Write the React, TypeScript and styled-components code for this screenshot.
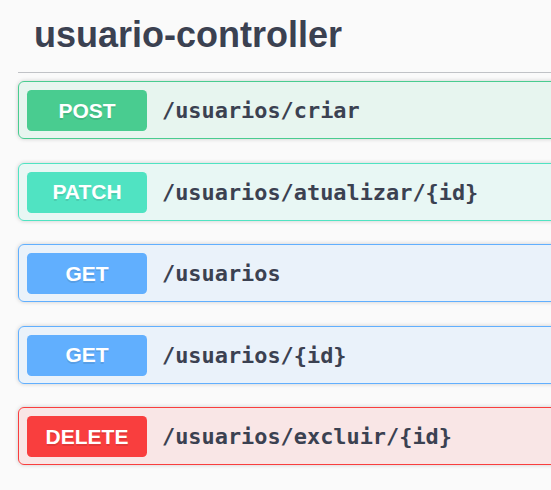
import React from 'react';
import styled, { createGlobalStyle } from 'styled-components';

type Method = 'post' | 'patch' | 'get' | 'delete';

interface Operation {
  method: Method;
  path: string;
}

const colors: Record<Method, { main: string; bg: string }> = {
  post: { main: '#49cc90', bg: 'rgba(73, 204, 144, 0.1)' },
  patch: { main: '#50e3c2', bg: 'rgba(80, 227, 194, 0.1)' },
  get: { main: '#61affe', bg: 'rgba(97, 175, 254, 0.1)' },
  delete: { main: '#f93e3e', bg: 'rgba(249, 62, 62, 0.1)' },
};

const operations: Operation[] = [
  { method: 'post', path: '/usuarios/criar' },
  { method: 'patch', path: '/usuarios/atualizar/{id}' },
  { method: 'get', path: '/usuarios' },
  { method: 'get', path: '/usuarios/{id}' },
  { method: 'delete', path: '/usuarios/excluir/{id}' },
];

const GlobalStyle = createGlobalStyle`
  html, body {
    margin: 0;
    padding: 0;
    background: #fafafa;
  }
`;

// the panel is cut by the right edge of the window in the screenshot
const Page = styled.div`
  width: 100%;
  overflow: hidden;
`;

const Section = styled.section`
  padding-left: 18px;
  width: calc(100% + 40px);
  box-sizing: border-box;
`;

const TagHeader = styled.h3`
  margin: 0;
  padding: 14px 0 16px 16px;
  border-bottom: 1px solid rgba(59, 65, 81, 0.3);
  font-family: 'Liberation Sans', Arial, sans-serif;
  font-size: 36px;
  line-height: 42px;
  font-weight: 700;
  color: #3b4151;
`;

const OpList = styled.div`
  display: flex;
  flex-direction: column;
  gap: 23.5px;
  padding: 8px 0 24px;
`;

const OpBlock = styled.div<{ $method: Method }>`
  display: flex;
  align-items: center;
  padding: 8px 8px 7px;
  border: 1px solid ${(p) => colors[p.$method].main};
  border-radius: 6px;
  background: ${(p) => colors[p.$method].bg};
  box-shadow: 0 0 4.5px rgba(0, 0, 0, 0.19);
`;

const MethodBadge = styled.span<{ $method: Method }>`
  display: flex;
  align-items: center;
  justify-content: center;
  width: 120px;
  height: 41px;
  flex-shrink: 0;
  border-radius: 4.5px;
  background: ${(p) => colors[p.$method].main};
  color: #fff;
  font-family: 'Liberation Sans', Arial, sans-serif;
  font-size: 21px;
  font-weight: 700;
  text-shadow: 0 1.5px 0 rgba(0, 0, 0, 0.1);
  text-transform: uppercase;
`;

const PathText = styled.span`
  margin-left: 15px;
  font-family: 'DejaVu Sans Mono', 'Liberation Mono', monospace;
  font-size: 21.9px;
  font-weight: 700;
  color: #3b4151;
`;

const App = () => (
  <>
    <GlobalStyle />
    <Page>
      <Section>
        <TagHeader>usuario-controller</TagHeader>
        <OpList>
          {operations.map((op) => (
            <OpBlock key={op.method + op.path} $method={op.method}>
              <MethodBadge $method={op.method}>{op.method}</MethodBadge>
              <PathText>{op.path}</PathText>
            </OpBlock>
          ))}
        </OpList>
      </Section>
    </Page>
  </>
);

export default App;
